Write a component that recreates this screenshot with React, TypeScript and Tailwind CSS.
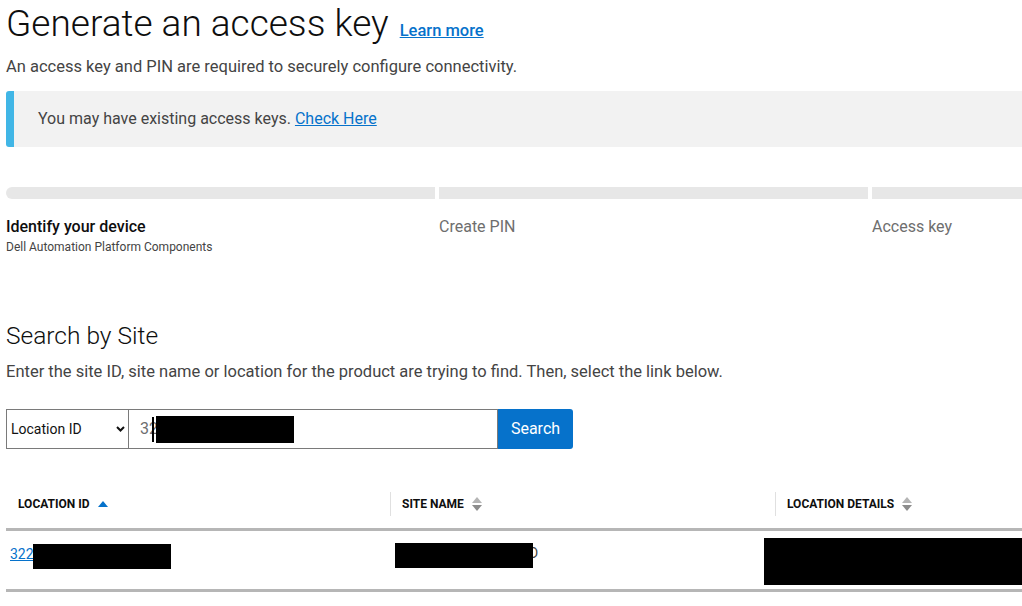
import React from "react";

const font = { fontFamily: "Roboto, 'Liberation Sans', sans-serif" };

function SortUp() {
  return (
    <svg width="10" height="6" viewBox="0 0 10 6" className="ml-[8px]">
      <path d="M0 6 L5 0 L10 6 Z" fill="#0672cb" />
    </svg>
  );
}

function SortBoth() {
  return (
    <svg width="10" height="14" viewBox="0 0 10 14" className="ml-[8px]">
      <path d="M0 6 L5 0 L10 6 Z" fill="#b4b4b4" />
      <path d="M0 8 L10 8 L5 14 Z" fill="#8c8c8c" />
    </svg>
  );
}

function Chevron() {
  return (
    <svg width="9" height="6" viewBox="0 0 9 6">
      <path d="M1 1 L4.5 4.5 L8 1" stroke="#111" strokeWidth="2" fill="none" />
    </svg>
  );
}

export default function App() {
  return (
    <div className="h-[606px] w-[1022px] overflow-hidden bg-white" style={font}>
      <div className="w-[1301px] pl-[6px]">
        {/* Page heading */}
        <div className="flex items-baseline pt-[2px]">
          <h1 className="text-[37px] leading-[43px] font-light text-[#0e0e0e]">
            Generate an access key
          </h1>
          <a className="ml-[11px] text-[16.5px] font-medium text-[#0672cb] underline">Learn more</a>
        </div>
        <p className="mt-[10px] text-[16.5px] leading-[24px] text-[#444]">
          An access key and PIN are required to securely configure connectivity.
        </p>

        {/* Notice */}
        <div className="mt-[12px] flex h-[56px] items-center rounded-l-[3px] border-l-[8px] border-[#41b6e6] bg-[#f2f2f2] pl-[24px]">
          <span className="text-[16px] leading-[24px] text-[#444]">
            You may have existing access keys.{" "}
            <a className="text-[#0672cb] underline">Check Here</a>
          </span>
        </div>

        {/* Stepper */}
        <div className="mt-[40px] grid grid-cols-3 gap-1">
          <div className="h-[12px] rounded-l-full bg-[#e7e7e7]" />
          <div className="h-[12px] bg-[#e7e7e7]" />
          <div className="h-[12px] bg-[#e7e7e7]" />
        </div>
        <div className="mt-[16px] grid grid-cols-3 gap-1">
          <div>
            <div className="text-[16px] leading-[24px] font-medium text-[#0e0e0e]">Identify your device</div>
            <div className="text-[12px] leading-[16px] text-[#444]">Dell Automation Platform Components</div>
          </div>
          <div className="text-[16px] leading-[24px] text-[#6e6e6e]">Create PIN</div>
          <div className="text-[16px] leading-[24px] text-[#6e6e6e]">Access key</div>
        </div>

        {/* Search */}
        <h2 className="mt-[65px] text-[24.5px] leading-[32px] font-light text-[#0e0e0e]">Search by Site</h2>
        <p className="mt-[8px] text-[16.5px] leading-[24px] text-[#444]">
          Enter the site ID, site name or location for the product are trying to find. Then, select the link below.
        </p>
        <div className="mt-[25px] flex h-[40px]">
          <div className="flex w-[123px] items-center justify-between border border-[#7a7a7a] pl-[4px] pr-[3px] text-[14px] text-[#111]">
            <span>Location ID</span>
            <Chevron />
          </div>
          <div className="flex w-[369px] items-center border-y border-r border-[#7a7a7a] pl-[11px] text-[16px] text-[#6e6e6e]">
            <span>32</span>
            <span className="relative ml-[-6px] h-[25px] w-[2px] bg-black" />
            <span className="ml-[2px] h-[27px] w-[138px] bg-black" />
          </div>
          <button className="w-[75px] rounded-r-[3px] bg-[#0672cb] text-[16px] text-white">Search</button>
        </div>

        {/* Results table */}
        <div className="mt-[30px]">
          <div className="flex h-[52px] items-center border-b-[3px] border-[#b6b6b6] text-[12px] font-bold text-[#0e0e0e]">
            <div className="flex w-[384px] items-center pl-[12px]">
              LOCATION ID
              <SortUp />
            </div>
            <div className="flex w-[385px] items-center">
              <span className="h-[24px] w-px bg-[#e0e0e0]" />
              <span className="pl-[11px]">SITE NAME</span>
              <SortBoth />
            </div>
            <div className="flex items-center">
              <span className="h-[24px] w-px bg-[#e0e0e0]" />
              <span className="pl-[11px]">LOCATION DETAILS</span>
              <SortBoth />
            </div>
          </div>
          <div className="flex h-[61px] border-b-[3px] border-[#b6b6b6]">
            <div className="flex w-[384px] items-start pl-[4px] pt-[13px]">
              <a className="text-[14px] leading-[20px] text-[#0672cb] underline">322</a>
              <span className="relative ml-[-1px] h-[25px] w-[138px] bg-black" />
            </div>
            <div className="flex w-[385px] items-start pl-[5px] pt-[12px]">
              <span className="relative z-10 h-[25px] w-[138px] bg-black" />
              <span className="ml-[-4px] text-[14px] leading-[20px] text-[#444]">D</span>
            </div>
            <div className="flex items-start pt-[7px]">
              <span className="ml-[-11px] h-[47px] w-[300px] bg-black" />
            </div>
          </div>
        </div>
      </div>
    </div>
  );
}
